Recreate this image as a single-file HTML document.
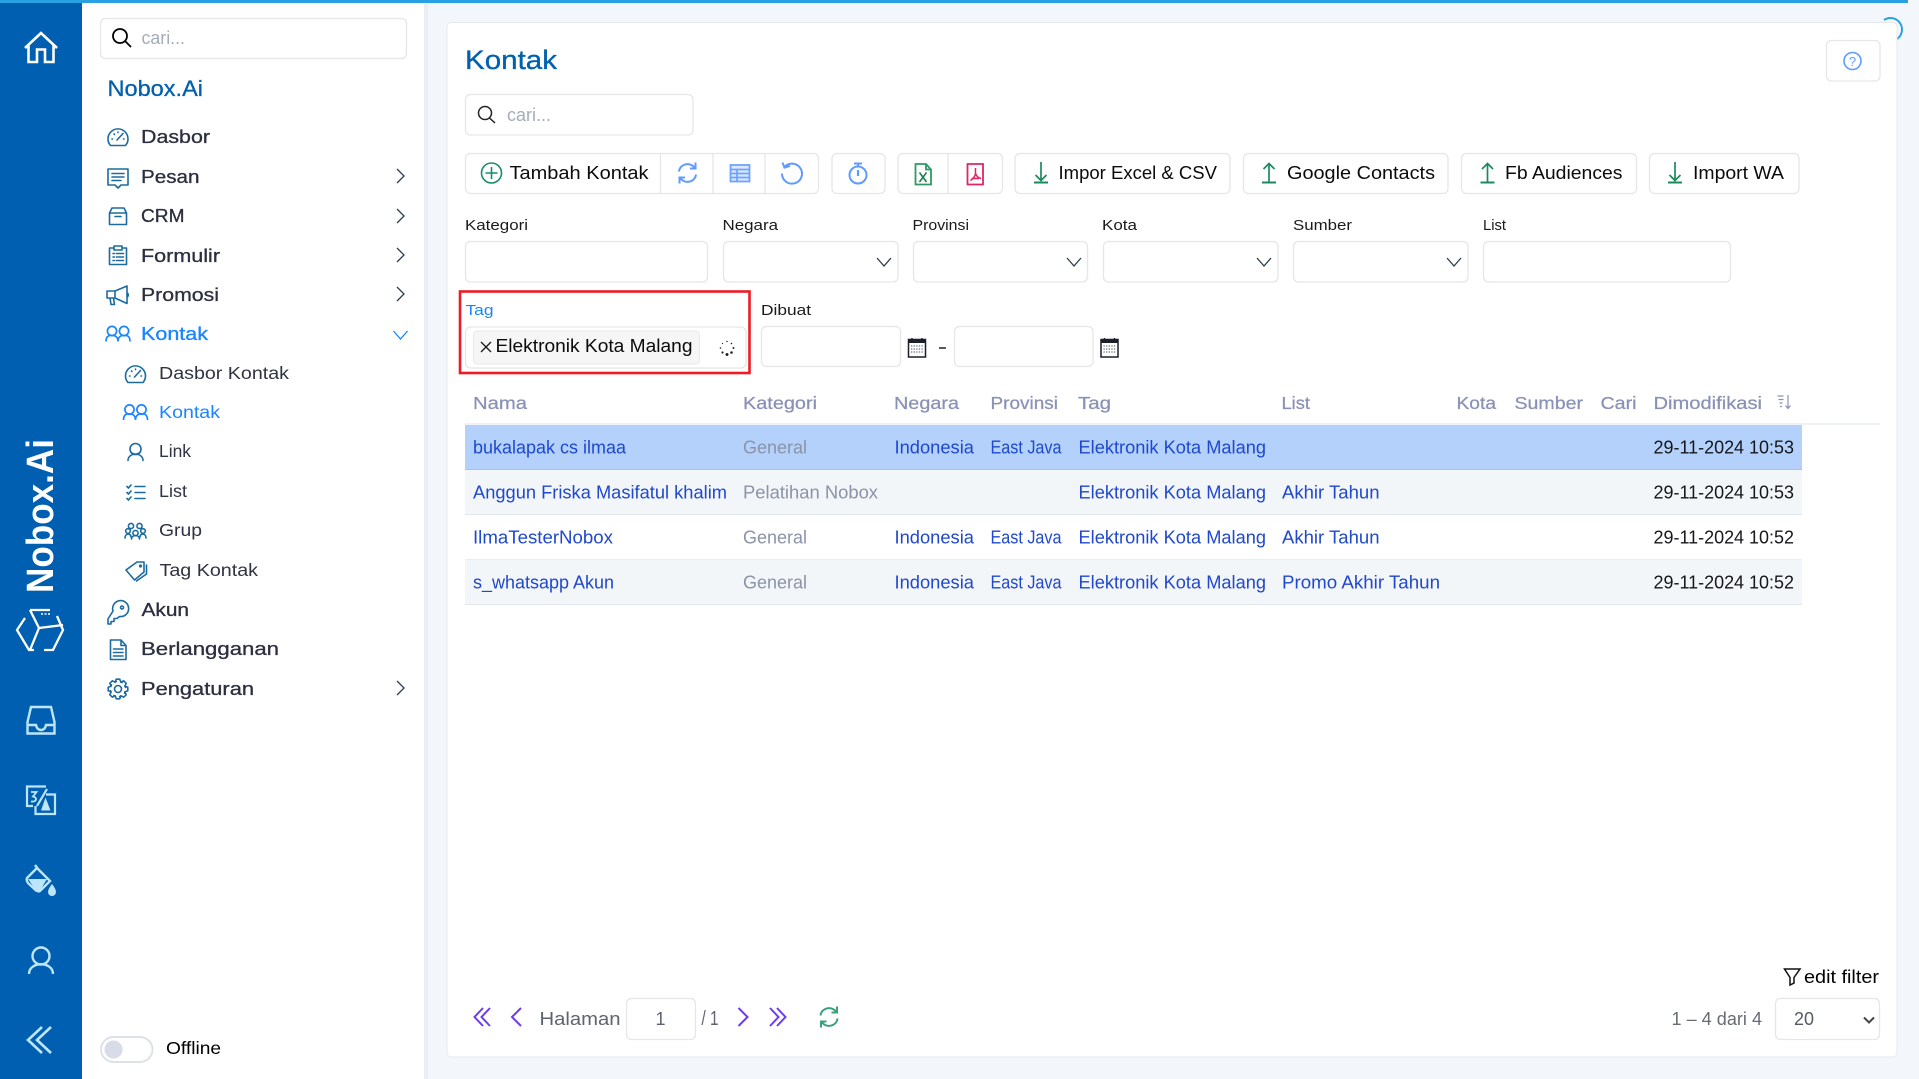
<!DOCTYPE html>
<html lang="id"><head><meta charset="utf-8"><title>Kontak</title>
<style>
html,body{margin:0;padding:0;background:#f3f6fa;overflow:hidden}
svg{display:block}
text{font-family:"Liberation Sans",sans-serif;font-size:18px;fill:#000}
.m{fill:#2b2f3f;stroke:#2b2f3f;stroke-width:.3}
.s{fill:#2f3342;font-size:17.5px}
.l{font-size:15px;fill:#1a1a1a}
.h{fill:#8a91b4;stroke:#8a91b4;stroke-width:.25;font-size:17.5px}
.a{fill:#1f48cf;font-size:18px}
.g{fill:#8b93a8;font-size:18px}
.d{fill:#15171c;font-size:18px}
.b{fill:#0b0b0b;font-size:18px}
.box{fill:#fff;stroke:#e6e6e6;stroke-width:1.3}
.ic{fill:none;stroke:#1c6b9f;stroke-width:1.6;stroke-linejoin:round;stroke-linecap:round}
.rl{fill:none;stroke:#bde6fb;stroke-width:2.4;stroke-linejoin:miter}
.bl{fill:none;stroke:#5f9bff;stroke-width:2}
.gr{fill:none;stroke:#1a8a5e;stroke-width:1.7}
.pg{fill:none;stroke:#6a3df0;stroke-width:2}
.ch{fill:none;stroke:#2c3e50;stroke-width:1.3}
</style></head>
<body>
<svg xmlns="http://www.w3.org/2000/svg" width="1919" height="1079" viewBox="0 0 1919 1079">
<defs>
<g id="gauge"><path d="M-7.5 8.5A10 10 0 1 1 7.5 8.5Z" class="ic"/><path d="M-1 3L5 -3.5" class="ic" stroke-width="2"/><path d="M-5.5 2h-.5M0 -5v.5M-4 -3l.4.4M6 2h-.5" class="ic"/></g>
<g id="ppl"><circle cx="-6" cy="-3" r="4.6"/><circle cx="6" cy="-3" r="4.6"/><path d="M-12 7.5C-12 1.5 -8 1 -6 1.5C-3 1 0 3 0 7.5C0 3 3 1 6 1.5C9 1 12 2 12 7.5"/></g>
<path id="cr" d="M-3.5 -7L3.5 0L-3.5 7"/>
<path id="cd" d="M-7 -4L0 4L7 -4"/>
<path id="rf" d="M-8.5 -1.5C-7.5 -9 2 -11.5 7 -5.5M8 -10.5V-4.5H2.5M8.5 1.5C7.5 9 -2 11.5 -7 5.5M-8 10.5V4.5H-2.5"/>
<path id="dn" d="M0 -10V8M-5.5 3L0 8.5L5.5 3"/>
<path id="up" d="M0 10V-8M-5.5 -3L0 -8.5L5.5 -3"/>
<g id="cal"><rect x="-8.5" y="-8.5" width="17" height="17.5" fill="#fff" stroke="#1b1f2a" stroke-width="1.5"/><rect x="-8.5" y="-8.5" width="17" height="3.5" fill="#1b1f2a"/><path d="M-5 -10V-7M5 -10V-7" stroke="#1b1f2a" stroke-width="1.4"/><path d="M-6 -2H6.5M-6 1H6.5M-6 4H6.5" stroke="#6a6e78" stroke-width="1.3" stroke-dasharray="1.3 1.3" fill="none"/></g>
</defs>

<rect width="1919" height="1079" fill="#f3f6fa"/>
<!-- rail -->
<rect x="0" y="0" width="82" height="1079" fill="#005fb0"/>
<rect x="82" y="0" width="342" height="1079" fill="#fff"/>
<rect x="424" y="0" width="4" height="1079" fill="#e9eef5"/>
<rect x="0" y="0" width="1908" height="3" fill="#29a0e2"/>
<path d="M1884 20A10.5 10.5 0 0 1 1897 39" fill="none" stroke="#29a0e2" stroke-width="2"/>

<path d="M25 48L41 33L57 48M28.5 45V62H37V49.5H45V62H53.5V45" fill="none" stroke="#fff" stroke-width="2.6"/>
<text transform="translate(53,593) rotate(-90)" textLength="154" lengthAdjust="spacingAndGlyphs" style="font-size:38px;font-weight:700;fill:#fff">Nobox.Ai</text>
<g fill="none" stroke="#fff" stroke-width="2.3">
<path d="M25 618L17 630L29 650H34M30 610H50M57 616L63 630L53 650H44M30 610L39 628L63 625M39 628L30 650"/>
</g>
<path d="M41 614h2m1.5 0h2m1.5 0h2" stroke="#fff" stroke-width="1.6"/>
<path class="rl" d="M31 707H51L54.5 722V733.5H27.5V722ZM28 725H36Q37 730 41 730Q45 730 46 725H54"/>
<g fill="none" stroke="#bde6fb"><path d="M46 786.500H27V806H33" stroke-width="2.200"/><path d="M46 794.500H55V814H35.500V806" stroke-width="2.200"/><path d="M47 789L37 806" stroke-width="2.200"/><path d="M31 792H36.500L33 796.500Q36 797 36 799.500Q35.500 802 31 801.500" stroke-width="1.800"/></g>
<path d="M45.500 797.500L50.500 810.500H41Z" fill="#bde6fb"/>
<path class="rl" d="M35 865L38 869M27 878L37 868L50 881L40 891Q38.500 892 36 890.500L28 883Q26 880 27 878Z"/>
<path d="M28 879H47L40 890.500Q38.500 892 36 890.500Z" fill="#bde6fb"/>
<path d="M52 884Q56 889 56 892A4 4 0 0 1 48 892Q48 889 52 884Z" fill="#bde6fb"/>
<circle cx="41" cy="956" r="8.500" class="rl"/><path class="rl" d="M29 974C29 961 53 961 53 974"/>
<path d="M42 1027L28 1040L42 1053M51 1027L37 1040L51 1053" fill="none" stroke="#bde6fb" stroke-width="2.600"/>

<!-- side panel -->
<rect x="100.500" y="18.500" width="306" height="40" rx="5" class="box"/>
<circle cx="120" cy="36" r="7" fill="none" stroke="#000" stroke-width="1.800"/><path d="M125 41L131 47" stroke="#000" stroke-width="1.800"/>
<text x="141.500" y="44" textLength="43.500" lengthAdjust="spacingAndGlyphs" style="fill:#a5acba;font-size:18px">cari...</text>
<text x="107.500" y="96" textLength="95.500" lengthAdjust="spacingAndGlyphs" style="font-size:22.500px;fill:#0060ae;stroke:#0060ae;stroke-width:.3">Nobox.Ai</text>

<text class="m" x="141" y="143" textLength="69" lengthAdjust="spacingAndGlyphs">Dasbor</text>
<text class="m" x="141" y="183" textLength="58.500" lengthAdjust="spacingAndGlyphs">Pesan</text>
<text class="m" x="141" y="222" textLength="43.500" lengthAdjust="spacingAndGlyphs">CRM</text>
<text class="m" x="141" y="262" textLength="79" lengthAdjust="spacingAndGlyphs">Formulir</text>
<text class="m" x="141" y="301" textLength="78" lengthAdjust="spacingAndGlyphs">Promosi</text>
<text x="141" y="340" textLength="67" lengthAdjust="spacingAndGlyphs" style="fill:#1a85ff;stroke:#1a85ff;stroke-width:.3">Kontak</text>
<text class="s" x="159" y="379" textLength="130" lengthAdjust="spacingAndGlyphs">Dasbor Kontak</text>
<text class="s" x="159" y="418" textLength="61" lengthAdjust="spacingAndGlyphs" style="fill:#1a85ff">Kontak</text>
<text class="s" x="159" y="457" textLength="32" lengthAdjust="spacingAndGlyphs">Link</text>
<text class="s" x="159" y="497" textLength="28" lengthAdjust="spacingAndGlyphs">List</text>
<text class="s" x="159" y="536" textLength="43" lengthAdjust="spacingAndGlyphs">Grup</text>
<text class="s" x="159.500" y="576" textLength="98.500" lengthAdjust="spacingAndGlyphs">Tag Kontak</text>
<text class="m" x="141.500" y="616" textLength="47.500" lengthAdjust="spacingAndGlyphs">Akun</text>
<text class="m" x="141" y="655" textLength="138" lengthAdjust="spacingAndGlyphs">Berlangganan</text>
<text class="m" x="141" y="695" textLength="113" lengthAdjust="spacingAndGlyphs">Pengaturan</text>

<use href="#gauge" x="118" y="137"/>
<use href="#gauge" x="135.500" y="374"/>
<g class="ic"><path d="M108 169H128V185H121L118 188L115 185H108Z"/><path d="M112 173.500H124M112 177H124M112 180.500H121"/></g>
<g class="ic"><path d="M109.500 213V224.500H126.500V213M109.500 213L112 208H124L126.500 213ZM109.500 213H126.500M115 216.500H121"/></g>
<g class="ic"><path d="M114 248H109.500V264.500H126.500V248H122M114 246H122V250H114Z"/><path d="M113 253.500h1.500M116.500 253.500H123.500M113 257h1.500M116.500 257H123.500M113 260.500h1.500M116.500 260.500H123.500"/></g>
<g class="ic"><path d="M107 291H115L127 286V303.500L115 298H107ZM115 291V298M110 298L111 304.500H114.500L113.500 298M127 292.500Q129.500 295 127 297.500"/></g>
<use href="#ppl" x="118" y="334" fill="none" stroke="#1a85ff" stroke-width="1.700"/>
<use href="#ppl" x="135.500" y="412.500" fill="none" stroke="#1a85ff" stroke-width="1.700"/>
<g class="ic"><circle cx="135.500" cy="449" r="5.500"/><path d="M128 460.500C128 452 143 452 143 460.500M131 452.500Q135.500 456 140 452.500"/></g>
<g class="ic"><path d="M127 486.500l1.500 1.500 2.500-3M127 492.500l1.500 1.500 2.500-3M127 498.500l1.500 1.500 2.500-3M135 486.500H145M135 492.500H145M135 498.500H145"/></g>
<g class="ic" stroke-width="1.300"><circle cx="131" cy="526" r="2.600"/><circle cx="139.500" cy="526" r="2.600"/><circle cx="135.500" cy="533" r="2.600"/><circle cx="128" cy="531" r="2.300"/><circle cx="143" cy="531" r="2.300"/><path d="M125 538C125 533 131 533 131 537M146 538C146 533 140 533 140 537M131.500 539C131.500 534.500 139.500 534.500 139.500 539"/></g>
<g class="ic"><path d="M126 570L137 562H144V572L134.500 580Z"/><path d="M146.500 565V574L136.500 581"/><circle cx="140.500" cy="566" r=".8"/></g>
<g class="ic"><path d="M113 611A8 8 0 1 1 119.500 616.500L117 618.500H114V621.500H111V624H108V619Z"/><circle cx="122" cy="607.500" r="1.500"/></g>
<g class="ic"><path d="M110.500 640H121L126 645.500V659.500H110.500ZM121 640V645.500H126M113.500 649H123M113.500 652.500H123M113.500 656H123"/></g>
<g class="ic" transform="translate(118,689)"><circle r="3.500"/>
<g id="gear"><path d="M7 -2.700L9.800 -1.800V1.800L7 2.700L6.500 4.200"/></g>
<use href="#gear" transform="rotate(45)"/><use href="#gear" transform="rotate(90)"/><use href="#gear" transform="rotate(135)"/><use href="#gear" transform="rotate(180)"/><use href="#gear" transform="rotate(225)"/><use href="#gear" transform="rotate(270)"/><use href="#gear" transform="rotate(315)"/></g>

<use href="#cr" x="400.500" y="176" class="ch"/><use href="#cr" x="400.500" y="216" class="ch"/><use href="#cr" x="400.500" y="255" class="ch"/><use href="#cr" x="400.500" y="294" class="ch"/><use href="#cr" x="400.500" y="688" class="ch"/>
<use href="#cd" x="400.500" y="335" fill="none" stroke="#1a85ff" stroke-width="1.300"/>

<rect x="101" y="1037" width="51.500" height="25" rx="12.500" fill="#fff" stroke="#dde1ea" stroke-width="2"/>
<circle cx="113.500" cy="1049.500" r="9" fill="#d8dce8"/>
<text x="166" y="1054" textLength="55" lengthAdjust="spacingAndGlyphs" style="font-size:17.500px">Offline</text>

<!-- card -->
<rect x="447" y="22.500" width="1450" height="1034.500" rx="4" fill="#fff" stroke="#e6eaf0" stroke-width="1"/>
<text x="465" y="69" textLength="92" lengthAdjust="spacingAndGlyphs" style="font-size:27px;fill:#0061ae;stroke:#0061ae;stroke-width:.3">Kontak</text>

<rect x="1826.500" y="40.500" width="53.500" height="40.500" rx="5" class="box"/>
<ellipse cx="1852.500" cy="61" rx="8.500" ry="8.500" fill="none" stroke="#5f9bff" stroke-width="1.600"/>
<text x="1852.500" y="66" text-anchor="middle" style="font-size:13px;fill:#5f9bff">?</text>

<rect x="465.500" y="94.500" width="227.500" height="40.500" rx="5" class="box"/>
<circle cx="485" cy="113" r="6.500" fill="none" stroke="#222" stroke-width="1.500"/><path d="M489.500 118L495 123" stroke="#222" stroke-width="1.500"/>
<text x="507" y="121" textLength="44" lengthAdjust="spacingAndGlyphs" style="fill:#a5acba">cari...</text>

<!-- toolbar -->
<rect x="465.500" y="153.500" width="353" height="40" rx="5" class="box"/>
<path d="M660.500 154V193M713 154V193M765 154V193" stroke="#e6e6e6" stroke-width="1.300"/>
<circle cx="491.500" cy="173" r="10" fill="none" stroke="#1a8a6e" stroke-width="1.600"/>
<path d="M491.500 167V179M485.500 173H497.500" stroke="#1a8a6e" stroke-width="1.600"/>
<text class="b" x="509.500" y="179" textLength="139" lengthAdjust="spacingAndGlyphs">Tambah Kontak</text>
<use href="#rf" x="687.500" y="173" class="bl"/>
<g fill="none" stroke="#6ea4ff" stroke-width="1.800"><rect x="730.500" y="165" width="19" height="16.500" fill="#dbe8ff"/><path d="M730.500 169.500H749.500M730.500 173.500H749.500M730.500 177.500H749.500M737 169V181.500"/></g>
<path class="bl" d="M785 166.500A10 10 0 1 1 782 173.500M782.500 162.500L784.500 167.500L790 166"/>
<rect x="832" y="153.500" width="53" height="40" rx="5" class="box"/>
<g class="bl"><circle cx="858" cy="175" r="8.500"/><path d="M854 163.500H862M858 164V166.500"/><path d="M858 170V176" stroke-width="2.200"/></g>
<rect x="898" y="153.500" width="104.500" height="40" rx="5" class="box"/>
<path d="M948 154V193" stroke="#e6e6e6" stroke-width="1.300"/>
<g fill="none" stroke="#2f9a63" stroke-width="1.800"><path d="M915.500 164H926L931 169.500V184.500H915.500ZM926 164V169.500H931"/><path d="M919.500 172.500L926.500 182M926.500 172.500L919.500 182" stroke="#1f7d50" stroke-width="1.600"/></g>
<g fill="none" stroke="#e02563" stroke-width="1.800"><path d="M967.500 164H983V184.500H967.500Z"/><path d="M975.500 168V173C975.500 176 973 179 970.500 180.500M975.500 173C976 176 978.500 178 981 178.500M971.500 178.500H979" stroke-width="1.500"/></g>

<rect x="1015" y="153.500" width="215" height="40" rx="5" class="box"/>
<use href="#dn" x="1041" y="172" class="gr"/><path d="M1034 182.500H1048" stroke="#1a8a5e" stroke-width="2"/>
<text class="b" x="1058.500" y="179" textLength="158.500" lengthAdjust="spacingAndGlyphs">Impor Excel &amp; CSV</text>
<rect x="1243.500" y="153.500" width="204.500" height="40" rx="5" class="box"/>
<use href="#up" x="1269" y="172" class="gr"/><path d="M1262 182.500H1276" stroke="#1a8a5e" stroke-width="2"/>
<text class="b" x="1287" y="179" textLength="148" lengthAdjust="spacingAndGlyphs">Google Contacts</text>
<rect x="1461.500" y="153.500" width="175" height="40" rx="5" class="box"/>
<use href="#up" x="1487.500" y="172" class="gr"/><path d="M1480.500 182.500H1494.500" stroke="#1a8a5e" stroke-width="2"/>
<text class="b" x="1505" y="179" textLength="117.500" lengthAdjust="spacingAndGlyphs">Fb Audiences</text>
<rect x="1649.500" y="153.500" width="149.500" height="40" rx="5" class="box"/>
<use href="#dn" x="1675" y="172" class="gr"/><path d="M1668 182.500H1682" stroke="#1a8a5e" stroke-width="2"/>
<text class="b" x="1693" y="179" textLength="91" lengthAdjust="spacingAndGlyphs">Import WA</text>

<!-- filters -->
<text class="l" x="465" y="230" textLength="63" lengthAdjust="spacingAndGlyphs">Kategori</text>
<text class="l" x="722.500" y="230" textLength="55.500" lengthAdjust="spacingAndGlyphs">Negara</text>
<text class="l" x="912.500" y="230" textLength="56.500" lengthAdjust="spacingAndGlyphs">Provinsi</text>
<text class="l" x="1102" y="230" textLength="35" lengthAdjust="spacingAndGlyphs">Kota</text>
<text class="l" x="1293" y="230" textLength="59" lengthAdjust="spacingAndGlyphs">Sumber</text>
<text class="l" x="1483" y="230" textLength="23" lengthAdjust="spacingAndGlyphs">List</text>
<rect x="465.500" y="241.500" width="242" height="40.500" rx="5" class="box"/>
<rect x="723.500" y="241.500" width="174.500" height="40.500" rx="5" class="box"/>
<rect x="913.500" y="241.500" width="174" height="40.500" rx="5" class="box"/>
<rect x="1103.500" y="241.500" width="174.500" height="40.500" rx="5" class="box"/>
<rect x="1293.500" y="241.500" width="174.500" height="40.500" rx="5" class="box"/>
<rect x="1483.500" y="241.500" width="247" height="40.500" rx="5" class="box"/>
<use href="#cd" x="884" y="262" class="ch"/><use href="#cd" x="1074" y="262" class="ch"/><use href="#cd" x="1264" y="262" class="ch"/><use href="#cd" x="1454" y="262" class="ch"/>

<rect x="460" y="291.500" width="289.500" height="81.500" fill="none" stroke="#ed1c24" stroke-width="2.600"/>
<text class="l" x="465.500" y="315" textLength="28" lengthAdjust="spacingAndGlyphs" style="fill:#1a85ff">Tag</text>
<rect x="465.500" y="327" width="280.500" height="41" rx="5" class="box"/>
<rect x="473.500" y="331" width="226" height="33" rx="4" fill="#f6f6f6" stroke="#e8e8e8"/>
<path d="M481 342L491 352M491 342L481 352" stroke="#1a1a1a" stroke-width="1.300"/>
<text class="b" x="495.500" y="352" textLength="197" lengthAdjust="spacingAndGlyphs">Elektronik Kota Malang</text>
<g fill="#222"><circle cx="727" cy="341.500" r=".7"/><circle cx="731.500" cy="343.500" r=".8"/><circle cx="733.500" cy="348" r="1"/><circle cx="731.500" cy="352.500" r="1.300"/><circle cx="727" cy="354.500" r="1.500"/><circle cx="722.500" cy="352.500" r="1.100"/><circle cx="720.500" cy="348" r=".8"/><circle cx="722.500" cy="343.500" r=".6"/></g>
<text class="l" x="761" y="315" textLength="50" lengthAdjust="spacingAndGlyphs">Dibuat</text>
<rect x="761.500" y="326.500" width="139" height="40" rx="5" class="box"/>
<use href="#cal" x="917" y="348"/>
<path d="M939 348H946" stroke="#222" stroke-width="1.500"/>
<rect x="954.500" y="326.500" width="138.500" height="40" rx="5" class="box"/>
<use href="#cal" x="1109.500" y="348"/>

<!-- table -->
<text class="h" x="473" y="409" textLength="54" lengthAdjust="spacingAndGlyphs">Nama</text>
<text class="h" x="743" y="409" textLength="74" lengthAdjust="spacingAndGlyphs">Kategori</text>
<text class="h" x="894" y="409" textLength="65" lengthAdjust="spacingAndGlyphs">Negara</text>
<text class="h" x="990.500" y="409" textLength="67.500" lengthAdjust="spacingAndGlyphs">Provinsi</text>
<text class="h" x="1078" y="409" textLength="33" lengthAdjust="spacingAndGlyphs">Tag</text>
<text class="h" x="1281.500" y="409" textLength="28.500" lengthAdjust="spacingAndGlyphs">List</text>
<text class="h" x="1456.500" y="409" textLength="39.500" lengthAdjust="spacingAndGlyphs">Kota</text>
<text class="h" x="1514.500" y="409" textLength="68.500" lengthAdjust="spacingAndGlyphs">Sumber</text>
<text class="h" x="1600.500" y="409" textLength="36" lengthAdjust="spacingAndGlyphs">Cari</text>
<text class="h" x="1653.500" y="409" textLength="108.500" lengthAdjust="spacingAndGlyphs">Dimodifikasi</text>
<path d="M1777.500 396H1783.500M1778.500 399.500H1783.500M1779.500 403H1782.500M1780 406.500H1782M1788 395V408.500M1785.500 405.500L1788 408.500L1790.500 405.500" fill="none" stroke="#8a91b4" stroke-width="1.200"/>
<rect x="465" y="423" width="1415" height="2" fill="#eef1f5"/>
<rect x="465" y="425" width="1337" height="44" fill="#b3d1fb"/>
<rect x="465" y="469" width="1337" height="1" fill="#a6c3ec"/>
<rect x="465" y="470" width="1337" height="44" fill="#f3f6f9"/>
<rect x="465" y="514" width="1337" height="1" fill="#e1e6ec"/>
<rect x="465" y="559" width="1337" height="1" fill="#e9edf2"/>
<rect x="465" y="560" width="1337" height="44" fill="#f3f6f9"/>
<rect x="465" y="604" width="1337" height="1" fill="#e1e6ec"/>

<text class="a" x="473" y="453.500" textLength="153" lengthAdjust="spacingAndGlyphs">bukalapak cs ilmaa</text>
<text class="g" x="743" y="453.500" textLength="64" lengthAdjust="spacingAndGlyphs">General</text>
<text class="a" x="894.500" y="453.500" textLength="79.500" lengthAdjust="spacingAndGlyphs">Indonesia</text>
<text class="a" x="990.500" y="453.500" textLength="71" lengthAdjust="spacingAndGlyphs">East Java</text>
<text class="a" x="1078.500" y="453.500" textLength="187.500" lengthAdjust="spacingAndGlyphs">Elektronik Kota Malang</text>
<text class="d" x="1653.500" y="453.500" textLength="140.500" lengthAdjust="spacingAndGlyphs">29-11-2024 10:53</text>

<text class="a" x="473" y="498.500" textLength="254" lengthAdjust="spacingAndGlyphs">Anggun Friska Masifatul khalim</text>
<text class="g" x="743" y="498.500" textLength="135" lengthAdjust="spacingAndGlyphs">Pelatihan Nobox</text>
<text class="a" x="1078.500" y="498.500" textLength="187.500" lengthAdjust="spacingAndGlyphs">Elektronik Kota Malang</text>
<text class="a" x="1282" y="498.500" textLength="97.500" lengthAdjust="spacingAndGlyphs">Akhir Tahun</text>
<text class="d" x="1653.500" y="498.500" textLength="140.500" lengthAdjust="spacingAndGlyphs">29-11-2024 10:53</text>

<text class="a" x="473" y="543.500" textLength="140" lengthAdjust="spacingAndGlyphs">IlmaTesterNobox</text>
<text class="g" x="743" y="543.500" textLength="64" lengthAdjust="spacingAndGlyphs">General</text>
<text class="a" x="894.500" y="543.500" textLength="79.500" lengthAdjust="spacingAndGlyphs">Indonesia</text>
<text class="a" x="990.500" y="543.500" textLength="71" lengthAdjust="spacingAndGlyphs">East Java</text>
<text class="a" x="1078.500" y="543.500" textLength="187.500" lengthAdjust="spacingAndGlyphs">Elektronik Kota Malang</text>
<text class="a" x="1282" y="543.500" textLength="97.500" lengthAdjust="spacingAndGlyphs">Akhir Tahun</text>
<text class="d" x="1653.500" y="543.500" textLength="140.500" lengthAdjust="spacingAndGlyphs">29-11-2024 10:52</text>

<text class="a" x="473" y="588.500" textLength="141" lengthAdjust="spacingAndGlyphs">s_whatsapp Akun</text>
<text class="g" x="743" y="588.500" textLength="64" lengthAdjust="spacingAndGlyphs">General</text>
<text class="a" x="894.500" y="588.500" textLength="79.500" lengthAdjust="spacingAndGlyphs">Indonesia</text>
<text class="a" x="990.500" y="588.500" textLength="71" lengthAdjust="spacingAndGlyphs">East Java</text>
<text class="a" x="1078.500" y="588.500" textLength="187.500" lengthAdjust="spacingAndGlyphs">Elektronik Kota Malang</text>
<text class="a" x="1282" y="588.500" textLength="158" lengthAdjust="spacingAndGlyphs">Promo Akhir Tahun</text>
<text class="d" x="1653.500" y="588.500" textLength="140.500" lengthAdjust="spacingAndGlyphs">29-11-2024 10:52</text>

<!-- footer -->
<path class="pg" d="M483 1008L474.500 1017L483 1026M490 1008L481.500 1017L490 1026"/>
<path class="pg" d="M521 1008L512 1017L521 1026"/>
<text x="539.500" y="1025" textLength="81" lengthAdjust="spacingAndGlyphs" style="fill:#5f6370">Halaman</text>
<rect x="626.500" y="998.500" width="69" height="41" rx="5" class="box"/>
<text x="660.500" y="1025" text-anchor="middle" style="fill:#5f6370">1</text>
<text x="701.500" y="1025" textLength="17" lengthAdjust="spacingAndGlyphs" style="fill:#5f6370;font-size:20px">/ 1</text>
<path class="pg" d="M738.500 1008L747.500 1017L738.500 1026"/>
<path class="pg" d="M770 1008L778.500 1017L770 1026M777 1008L785.500 1017L777 1026"/>
<use href="#rf" x="829" y="1017" fill="none" stroke="#3aa07a" stroke-width="2"/>

<path d="M1784.500 969H1800L1794 977.500V983L1790 985V977.500Z" fill="none" stroke="#111" stroke-width="1.500"/>
<text x="1804" y="983" textLength="75" lengthAdjust="spacingAndGlyphs">edit filter</text>
<text x="1671.500" y="1025" textLength="90.500" lengthAdjust="spacingAndGlyphs" style="fill:#666b76">1 – 4 dari 4</text>
<rect x="1775.500" y="998.500" width="104" height="41" rx="5" class="box"/>
<text x="1794" y="1025" textLength="20" lengthAdjust="spacingAndGlyphs" style="fill:#555a66">20</text>
<path d="M1864 1017.500L1869 1022.500L1874 1017.500" fill="none" stroke="#444" stroke-width="2"/>
</svg>
</body></html>
